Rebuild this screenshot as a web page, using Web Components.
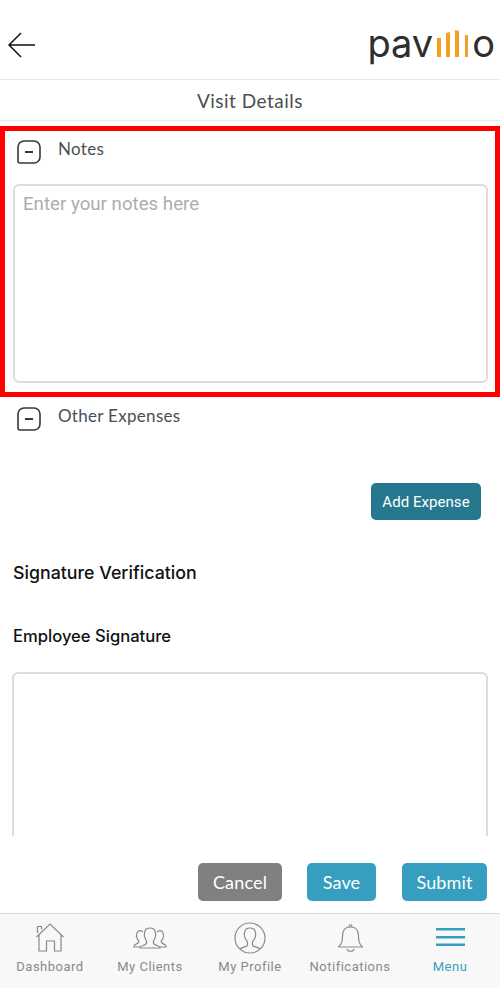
<!DOCTYPE html>
<html>
<head>
<meta charset="utf-8">
<title>Visit Details</title>
<style>
  html, body { margin: 0; height: 100%; background: #fff; }
  body { font-family: "Lato", "Noto Sans", sans-serif; }
</style>
</head>
<body>
<visit-page></visit-page>

<script>
class AppHeader extends HTMLElement {
    constructor() {
        super();
        this.attachShadow({ mode: "open" });
        this.shadowRoot.innerHTML = `
        <style>
          :host { display: block; flex: none; }
          .top {
            height: 79px;
            display: flex;
            align-items: center;
            justify-content: space-between;
            padding: 0 5px 0 8px;
            border-bottom: 1px solid #e8e8e8;
          }
          .back { display: block; margin-top: 10px; }
          .logo {
            display: flex;
            align-items: baseline;
            margin-top: 6px;
            font: 400 38px/44px "Inter", sans-serif;
            color: #2e2e2e;
          }
          .logo svg { margin: 0 3px 0 4px; }
          .title {
            height: 40px;
            display: flex;
            align-items: center;
            justify-content: center;
            border-bottom: 1px solid #e8e8e8;
            font: 400 19px "Lato", sans-serif;
            letter-spacing: .5px;
            color: #4a4f52;
          }
        </style>
        <div class="top">
          <svg class="back" width="28" height="28" viewBox="0 0 28 28" fill="none" stroke="#111" stroke-width="1.5">
            <path d="M13 2 1 14l12 12M1 14h26"/>
          </svg>
          <div class="logo">pav<svg width="32" height="27" viewBox="0 0 32 27" fill="#f2a024">
              <path d="M0 8h4v19H0zM9 3l4-1v25H9zM18 0l4 1v26h-4zM28 5h3v22h-3z"/>
            </svg>o</div>
        </div>
        <div class="title"><slot></slot></div>
        `;
    }
}

class CollapseSection extends HTMLElement {
    constructor() {
        super();
        this.attachShadow({ mode: "open" });
        this.shadowRoot.innerHTML = `
        <style>
          :host { display: block; }
          .head {
            display: flex;
            align-items: flex-start;
            gap: 17px;
            padding-left: var(--head-left, 17px);
            font: 400 17px/20px "Lato", sans-serif;
            letter-spacing: .3px;
            color: #4a4f52;
          }
          svg { display: block; margin-top: 1px; }
        </style>
        <div class="head">
          <svg width="24" height="24" viewBox="0 0 24 24" fill="none" stroke="#33383c" stroke-width="1.6">
            <path d="M7 1h10a6 6 0 0 1 6 6v10a6 6 0 0 1-6 6H3a2 2 0 0 1-2-2V7a6 6 0 0 1 6-6Z"/>
            <path d="M8 12h8" stroke-width="2"/>
          </svg>
          <span></span>
        </div>
        <slot></slot>
        `;
    }

    connectedCallback() {
        this.shadowRoot.querySelector("span").textContent = this.getAttribute("label");
    }
}

class AppButton extends HTMLElement {
    constructor() {
        super();
        this.attachShadow({ mode: "open" });
        this.shadowRoot.innerHTML = `
        <style>
          :host {
            display: flex;
            align-items: center;
            justify-content: center;
            box-sizing: border-box;
            height: 38px;
            border-radius: 5px;
            background: var(--btn-bg, #369fbf);
            color: #fff;
            font: 400 var(--btn-size, 18px) var(--btn-font, "Lato"), sans-serif;
            letter-spacing: var(--btn-spacing, .15px);
          }
        </style>
        <slot></slot>
        `;
    }
}

class TabItem extends HTMLElement {
    constructor() {
        super();
        this.attachShadow({ mode: "open" });
        this.shadowRoot.innerHTML = `
        <style>
          :host {
            flex: 1;
            display: flex;
            flex-direction: column;
            align-items: center;
            font: 400 13px/16px "Roboto", sans-serif;
            letter-spacing: .5px;
            color: #8a8a8a;
          }
          :host([active]) { color: #369fbf; }
          .icon { height: 30px; margin-bottom: 6px; }
          ::slotted(svg) { display: block; }
        </style>
        <div class="icon"><slot name="icon"></slot></div>
        <slot></slot>
        `;
    }
}

class TabBar extends HTMLElement {
    constructor() {
        super();
        this.attachShadow({ mode: "open" });
        this.shadowRoot.innerHTML = `
        <style>
          :host {
            flex: none;
            height: 75px;
            box-sizing: border-box;
            display: flex;
            padding: 9px 0 0;
            background: #f8f8f8;
            border-top: 1px solid #d8d8d8;
          }
        </style>
        <slot></slot>
        `;
    }
}

class VisitPage extends HTMLElement {
    constructor() {
        super();
        this.attachShadow({ mode: "open" });
        this.shadowRoot.innerHTML = `
        <style>
          :host {
            display: flex;
            flex-direction: column;
            height: 988px;
            overflow: hidden;
          }
          .scroll { flex: 1; min-height: 0; overflow: hidden; padding-top: 5px; }
          .marked {
            height: 271px;
            box-sizing: border-box;
            border: 5px solid #ff0000;
            padding-top: 8px;
            --head-left: 12px;
          }
          .notes {
            box-sizing: border-box;
            height: 199px;
            margin: 20px 7px 0 8px;
            padding: 8px 8px;
            border: 2px solid #dcdcdc;
            border-radius: 6px;
            font: 400 18.7px/20px "Roboto", sans-serif;
            color: #adadad;
          }
          .other { margin-top: 9px; }
          .add {
            display: flex;
            justify-content: flex-end;
            padding: 52px 19px 0 0;
          }
          .add app-button {
            width: 110px;
            height: 37px;
            --btn-bg: #26788f;
            --btn-size: 15px;
            --btn-font: "Roboto";
            --btn-spacing: .05px;
          }
          h2, h3 { margin: 0; color: #111; font-family: "Inter", sans-serif; font-weight: 500; padding-left: 13px; }
          h2 { font-size: 17.8px; line-height: 22px; margin-top: 42px; }
          h3 { font-size: 16.6px; line-height: 20px; margin-top: 42px; }
          .sign {
            height: 200px;
            margin: 26px 12px 0 12px;
            border: 2px solid #dcdcdc;
            border-radius: 6px;
          }
          .actions {
            flex: none;
            height: 77px;
            box-sizing: border-box;
            display: flex;
            justify-content: flex-end;
            gap: 25px;
            padding: 27px 13px 0 0;
          }
          .actions app-button:nth-child(1) { width: 84px; --btn-bg: #808080; }
          .actions app-button:nth-child(2) { width: 69px; }
          .actions app-button:nth-child(3) { width: 85px; margin-left: 1px; }
        </style>
        <app-header>Visit Details</app-header>
        <div class="scroll">
          <div class="marked">
            <collapse-section label="Notes">
              <div class="notes">Enter your notes here</div>
            </collapse-section>
          </div>
          <collapse-section class="other" label="Other Expenses"></collapse-section>
          <div class="add"><app-button>Add Expense</app-button></div>
          <h2>Signature Verification</h2>
          <h3>Employee Signature</h3>
          <div class="sign"></div>
        </div>
        <div class="actions">
          <app-button>Cancel</app-button>
          <app-button>Save</app-button>
          <app-button>Submit</app-button>
        </div>
        <tab-bar>
          <tab-item>
            <svg slot="icon" width="28" height="29" viewBox="0 0 28 29" fill="none" stroke="#8a8a8a" stroke-width="1.2">
              <path d="M.5 14 14 1l13.5 13M1.5 10V3.500h4V6.500M3 12v16h7.500V18h8v10H25V12"/>
            </svg>
            Dashboard
          </tab-item>
          <tab-item>
            <svg slot="icon" style="margin-top:4px" width="34" height="22" viewBox="0 0 34 22" fill="none" stroke="#8a8a8a" stroke-width="1.2">
              <path d="M13 13c-2-3-2-6-1-9C13 0 21 0 22 4c1 3 1 6-1 9-1 2-1 3 0 4 1 1 5 2 6 3v1H7v-1c1-1 5-2 6-3 1-1 1-2 0-4Z"/>
              <path d="M10 5C8 3 5 3 4 6c-1 2-1 4 1 7 1 1 1 2 0 3-1 1-3 1-4 3v1h6"/>
              <path d="M24 5c2-2 5-2 6 1 1 2 1 4-1 7-1 1-1 2 0 3 1 1 3 1 4 3v1h-6"/>
            </svg>
            My Clients
          </tab-item>
          <tab-item>
            <svg slot="icon" style="margin-top:-1px" width="32" height="32" viewBox="0 0 32 32" fill="none" stroke="#8a8a8a" stroke-width="1.2">
              <circle cx="16" cy="16" r="15"/>
              <path d="M6 27c2-2 5-2 7-3 1-2 1-3 0-5-3-3-3-7-2-10 1-4 9-4 10 0 1 3 1 7-2 10-1 2-1 3 0 5 2 1 5 1 7 3"/>
            </svg>
            My Profile
          </tab-item>
          <tab-item>
            <svg slot="icon" width="25" height="29" viewBox="0 0 25 29" fill="none" stroke="#8a8a8a" stroke-width="1.2">
              <path d="M.5 24c3-3 4-5 4-11 0-6 3-9 8-9s8 3 8 9c0 6 1 8 4 11ZM11 4c0-3 3-3 3 0M9 26c1 3 6 3 7 0"/>
            </svg>
            Notifications
          </tab-item>
          <tab-item active>
            <svg slot="icon" style="margin-top:5px" width="29" height="18" viewBox="0 0 29 18" fill="#369fbf">
              <rect y="0" width="29" height="2.500"/><rect y="8" width="29" height="2.500"/><rect y="15.500" width="29" height="2.500"/>
            </svg>
            Menu
          </tab-item>
        </tab-bar>
        `;
    }
}

customElements.define("app-header", AppHeader);
customElements.define("collapse-section", CollapseSection);
customElements.define("app-button", AppButton);
customElements.define("tab-item", TabItem);
customElements.define("tab-bar", TabBar);
customElements.define("visit-page", VisitPage);
</script>
</body>
</html>
